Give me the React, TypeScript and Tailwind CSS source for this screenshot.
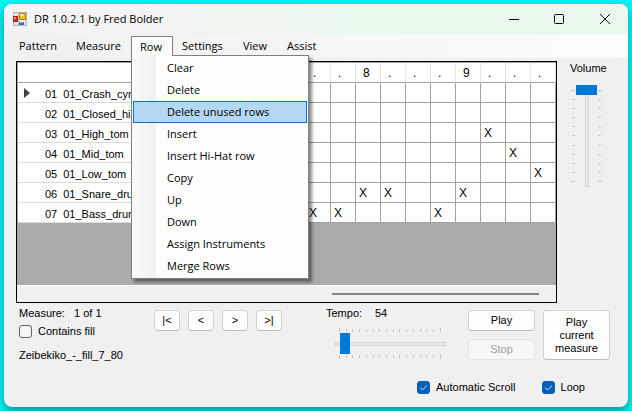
import type { ReactNode } from "react";

const menus = [
  { label: "Pattern", width: "w-[57px]" },
  { label: "Measure", width: "w-[64px]" },
  { label: "Row", width: "w-[42px]" },
  { label: "Settings", width: "w-[61px]" },
  { label: "View", width: "w-[44px]" },
  { label: "Assist", width: "w-[50px]" },
];

const rowActions = [
  "Clear",
  "Delete",
  "Delete unused rows",
  "Insert",
  "Insert Hi-Hat row",
  "Copy",
  "Up",
  "Down",
  "Assign Instruments",
  "Merge Rows",
];

const steps = ["", "", "", "", "", "", ".", ".", "8", ".", ".", ".", "9", ".", ".", "."];

const tracks = [
  { no: "01", name: "01_Crash_cymbal", hits: [] as number[] },
  { no: "02", name: "01_Closed_hi-hat", hits: [] },
  { no: "03", name: "01_High_tom", hits: [13] },
  { no: "04", name: "01_Mid_tom", hits: [14] },
  { no: "05", name: "01_Low_tom", hits: [15] },
  { no: "06", name: "01_Snare_drum", hits: [8, 9, 12] },
  { no: "07", name: "01_Bass_drum", hits: [6, 7, 11] },
];

function AppIcon() {
  return (
    <svg width="14" height="14" viewBox="0 0 14 14" aria-hidden="true">
      <rect x="0.5" y="0.5" width="13" height="13" fill="#e4e4e4" stroke="#b5b5b5" />
      <path d="M5.5 1v12" stroke="#c4c4c4" />
      <rect x="0.5" y="4.5" width="4" height="5" fill="#c9312a" stroke="#a3241c" />
      <rect x="1" y="5" width="2" height="2" fill="#ef8e80" />
      <rect x="6.5" y="1.5" width="6" height="6" fill="#f6bd1c" stroke="#b88a14" />
      <rect x="7" y="2" width="4" height="2" fill="#ffe28a" />
      <rect x="6" y="10" width="5" height="3" fill="#2f6fd6" />
      <rect x="7" y="10" width="3" height="1" fill="#8db7f5" />
    </svg>
  );
}

function TitleBar() {
  return (
    <header className="flex h-[30px] items-center bg-linear-to-r from-[#f3f3f3] from-20% to-[#e9f8ea] to-60% pl-[9px]">
      <AppIcon />
      <h1 className="ml-[7px] flex-1 text-[11px] leading-4 whitespace-nowrap">DR 1.0.2.1 by Fred Bolder</h1>
      <button aria-label="Minimize" className="flex h-7 w-[45px] items-center justify-center">
        <svg width="10" height="10" viewBox="0 0 10 10"><path d="M0 5.5h10" stroke="#000" /></svg>
      </button>
      <button aria-label="Maximize" className="flex h-7 w-[45px] items-center justify-center">
        <svg width="10" height="10" viewBox="0 0 10 10"><rect x="0.5" y="0.5" width="9" height="9" rx="1" fill="none" stroke="#000" /></svg>
      </button>
      <button aria-label="Close" className="flex h-7 w-[47px] items-center justify-center">
        <svg width="10" height="10" viewBox="0 0 10 10"><path d="M0 0l10 10M10 0L0 10" stroke="#000" /></svg>
      </button>
    </header>
  );
}

function RowMenu() {
  return (
    <ul className="absolute top-[18px] -left-px z-10 w-[178px] border border-[#808080] bg-linear-to-r from-[#fbfbfb] to-[#f0f0f0] to-[24px] p-px shadow-[3px_3px_3px_rgba(0,0,0,0.45)]">
      <li className="absolute inset-y-0 right-0 left-[24px] bg-[#fdfdfd]" aria-hidden="true" />
      {rowActions.map((action) => (
        <li key={action} className="relative">
          <button
            className={
              "block h-[22px] w-full border pl-[33px] text-left text-[11px] leading-5 whitespace-nowrap " +
              (action === "Delete unused rows" ? "border-[#0078d7] bg-[#b5d7f3]" : "border-transparent")
            }
          >
            {action}
          </button>
        </li>
      ))}
    </ul>
  );
}

function MenuBar() {
  return (
    <nav className="flex h-6 items-center bg-linear-to-r from-[#f0f0f0] to-[#fcfcfc] pl-[6px]">
      {menus.map((menu) =>
        menu.label === "Row" ? (
          <div key={menu.label} className={"relative h-5 border border-b-0 border-[#808080] bg-[#fbfbfb] " + menu.width}>
            <button className="relative z-20 block h-[19px] w-full bg-[#fbfbfb] pl-2 text-left text-[11px] leading-4">
              {menu.label}
            </button>
            <RowMenu />
          </div>
        ) : (
          <button key={menu.label} className={"h-5 pl-[9px] text-left text-[11px] leading-4 " + menu.width}>
            {menu.label}
          </button>
        ),
      )}
    </nav>
  );
}

function PatternGrid() {
  return (
    <div className="flex h-[242px] min-w-0 flex-1 flex-col border border-black">
      <div className="flex-1 overflow-hidden border-t border-l border-[#a0a0a0] bg-[#ababab]">
        <table className="w-full table-fixed border-separate border-spacing-0 bg-white">
          <thead>
            <tr className="h-5">
              <th className="w-[25px] border-b border-[#a0a0a0]" />
              <th className="border-b border-[#a0a0a0]" />
              {steps.map((step, i) => (
                <th
                  key={i}
                  className="h-5 w-[25px] border-r border-b border-r-[#e3e3e3] border-b-[#a0a0a0] p-0 pl-[7px] text-left text-[12px] leading-4 font-normal"
                >
                  {step}
                </th>
              ))}
            </tr>
          </thead>
          <tbody>
            {tracks.map((track, row) => (
              <tr key={track.no}>
                <td className="h-5 border-b border-[#dcdcdc] p-0 pl-[6px]">
                  {row === 0 && (
                    <svg width="6" height="10" viewBox="0 0 6 10" className="block"><path d="M0 0l6 5-6 5z" fill="#404040" /></svg>
                  )}
                </td>
                <th
                  scope="row"
                  className="h-5 overflow-hidden border-b border-[#dcdcdc] p-0 pt-1 pl-[2px] text-left text-[11px] leading-[15px] font-normal whitespace-nowrap"
                >
                  {track.no}
                  <span className="ml-[6px]">{track.name}</span>
                </th>
                {steps.map((_, i) => (
                  <td key={i} className="h-5 border-r border-b border-[#a0a0a0] p-0 pl-[3px] text-[12px] leading-4">
                    {track.hits.includes(i) ? "X" : ""}
                  </td>
                ))}
              </tr>
            ))}
          </tbody>
        </table>
      </div>
      <div className="flex h-[17px] items-center border-t border-white bg-[#f0f0f0] pr-[17px]">
        <div className="ml-auto h-[2px] w-[207px] bg-[#868686]" />
      </div>
    </div>
  );
}

const volumeTicks = Array.from({ length: 11 }, (_, i) => i);
const tempoTicks = Array.from({ length: 16 }, (_, i) => i);

function VolumeTicks({ side }: { side: "left" | "right" }) {
  return (
    <div className={"flex h-[92px] w-1 flex-col justify-between " + (side === "left" ? "items-end" : "items-start")}>
      {volumeTicks.map((i) => (
        <span key={i} className={"h-px bg-[#c4c4c4] " + (i % 10 === 0 ? "w-1" : "w-[3px]")} />
      ))}
    </div>
  );
}

function Volume() {
  return (
    <div className="flex w-[71px] flex-col items-start pl-[13px]">
      <label htmlFor="volume" className="text-[11px] leading-[14px]">Volume</label>
      <div className="mt-[10px] ml-px flex items-center gap-px">
        <VolumeTicks side="left" />
        <div className="grid justify-items-center">
          <div className="h-[102px] w-1 border border-[#d0d4d4] bg-[#e7eaea] [grid-area:1/1]" />
          <input
            id="volume"
            type="range"
            min={0}
            max={10}
            defaultValue={10}
            className="h-[102px] w-[21px] appearance-none bg-transparent [direction:rtl] [grid-area:1/1] [writing-mode:vertical-lr] [&::-webkit-slider-thumb]:h-[10px] [&::-webkit-slider-thumb]:w-[21px] [&::-webkit-slider-thumb]:appearance-none [&::-webkit-slider-thumb]:bg-[#0078d7]"
          />
        </div>
        <VolumeTicks side="right" />
      </div>
    </div>
  );
}

function TempoTicks({ side }: { side: "top" | "bottom" }) {
  return (
    <div className={"mx-[5px] flex h-1 justify-between " + (side === "top" ? "items-end" : "items-start")}>
      {tempoTicks.map((i) => (
        <span key={i} className={"w-px bg-[#c4c4c4] " + (i % 15 === 0 ? "h-1" : "h-[3px]")} />
      ))}
    </div>
  );
}

function Tempo() {
  return (
    <div className="ml-11 w-[120px]">
      <div className="flex text-[11px] leading-[14px]">
        <label htmlFor="tempo" className="w-[49px]">Tempo:</label>
        <output htmlFor="tempo">54</output>
      </div>
      <div className="mt-2 ml-2 flex w-[112px] flex-col gap-px">
        <TempoTicks side="top" />
        <div className="grid items-center">
          <div className="h-1 border border-[#d0d4d4] bg-[#e7eaea] [grid-area:1/1]" />
          <input
            id="tempo"
            type="range"
            min={30}
            max={430}
            defaultValue={54}
            className="h-[21px] w-full appearance-none bg-transparent [grid-area:1/1] [&::-webkit-slider-thumb]:h-[21px] [&::-webkit-slider-thumb]:w-[10px] [&::-webkit-slider-thumb]:appearance-none [&::-webkit-slider-thumb]:bg-[#0078d7]"
          />
        </div>
        <TempoTicks side="bottom" />
      </div>
    </div>
  );
}

function PushButton({ children, className, disabled }: { children: ReactNode; className: string; disabled?: boolean }) {
  return (
    <button
      disabled={disabled}
      className={
        "rounded border text-[11px] leading-[13px] " +
        (disabled ? "border-[#e4e4e4] bg-[#f7f7f7] text-[#a0a0a0] " : "border-[#d0d0d0] border-b-[#bcbcbc] bg-[#fdfdfd] ") +
        className
      }
    >
      {children}
    </button>
  );
}

function CheckBox({ label, checked }: { label: string; checked?: boolean }) {
  return (
    <label className="flex items-center gap-[6px] text-[11px] leading-[14px] whitespace-nowrap">
      <span className="grid size-[13px]">
        <input
          type="checkbox"
          defaultChecked={checked}
          className="peer size-[13px] appearance-none rounded-[3px] border border-[#626262] bg-[#f5f5f5] [grid-area:1/1] checked:border-[#005fb8] checked:bg-[#005fb8]"
        />
        <svg viewBox="0 0 13 13" className="pointer-events-none invisible size-[13px] [grid-area:1/1] peer-checked:visible" aria-hidden="true">
          <path d="M3 6.5l2.5 2.5 4.5-4.5" fill="none" stroke="#d6e6f5" />
        </svg>
      </span>
      {label}
    </label>
  );
}

export default function App() {
  return (
    <div className="flex min-h-screen flex-col bg-[#00f4f4] p-1 font-['Liberation_Sans',Arial,sans-serif] text-black">
      <main className="flex flex-1 flex-col rounded-lg bg-[#f0f0f0] shadow-[0_4px_8px_rgba(0,0,0,0.4)]">
        <div className="font-['Open_Sans','Noto_Sans',sans-serif] [&>header]:rounded-t-lg">
          <TitleBar />
          <MenuBar />
        </div>
        <section className="flex pt-[3px] pl-3">
          <PatternGrid />
          <Volume />
        </section>
        <section className="flex items-start pt-[3px] pr-[18px] pl-[15px]">
          <div className="flex w-[135px] flex-col text-[11px] leading-[14px]">
            <p className="flex">
              <span className="w-[55px]">Measure:</span>
              <span>1 of 1</span>
            </p>
            <div className="mt-1">
              <CheckBox label="Contains fill" />
            </div>
            <p className="mt-[10px]">Zeibekiko_-_fill_7_80</p>
          </div>
          <div className="flex gap-2 pt-1">
            <PushButton className="h-[21px] w-[26px]">|&lt;</PushButton>
            <PushButton className="h-[21px] w-[26px]">&lt;</PushButton>
            <PushButton className="h-[21px] w-[26px]">&gt;</PushButton>
            <PushButton className="h-[21px] w-[26px]">&gt;|</PushButton>
          </div>
          <Tempo />
          <div className="ml-auto flex gap-2 pt-1">
            <div className="flex flex-col justify-between">
              <PushButton className="h-[21px] w-[67px]">Play</PushButton>
              <PushButton className="h-[21px] w-[67px]" disabled>Stop</PushButton>
            </div>
            <PushButton className="h-[50px] w-[67px] px-2">Play current measure</PushButton>
          </div>
        </section>
        <section className="mt-[18px] flex justify-end gap-[26px] pr-[43px]">
          <CheckBox label="Automatic Scroll" checked />
          <CheckBox label="Loop" checked />
        </section>
      </main>
    </div>
  );
}
